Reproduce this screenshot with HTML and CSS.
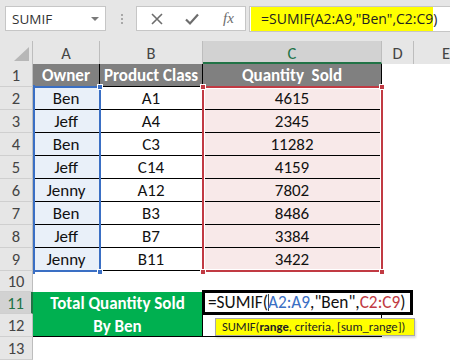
FILE: index.html
```html
<!DOCTYPE html>
<html>
<head>
<meta charset="utf-8">
<link rel="stylesheet" href="styles.css">
</head>
<body>
<div class="toolbar">
  <div class="namebox"><span>SUMIF</span><span class="dd"></span></div>
  <div class="dots"><i></i><i></i><i></i></div>
  <div class="fxbox">
    <svg class="ic" width="14" height="14" viewBox="0 0 14 14"><path d="M2 2L12 12M12 2L2 12" stroke="#6d6d6d" stroke-width="1.6" fill="none"/></svg>
    <svg class="ic" width="16" height="14" viewBox="0 0 16 14"><path d="M2 7.5L6 11.5L14 2.5" stroke="#6d6d6d" stroke-width="2.2" fill="none"/></svg>
    <span class="fx">fx</span>
  </div>
  <div class="formula"><div class="hl">=SUMIF(A2:A9,"Ben",C2:C9)</div></div>
</div>

<div class="sheet">
  <div class="ch corner"><span class="tri"></span></div>
  <div class="ch">A</div>
  <div class="ch">B</div>
  <div class="ch sel">C</div>
  <div class="ch">D</div>
  <div class="ch last">E</div>

  <div class="rh">1</div>
  <div class="c hd">Owner</div>
  <div class="c hd">Product Class</div>
  <div class="c hd">Quantity&nbsp; Sold</div>
  <div class="e"></div><div class="e"></div>

  <div class="rh">2</div><div class="c a">Ben</div><div class="c">A1</div><div class="c q">4615</div><div class="e"></div><div class="e"></div>
  <div class="rh">3</div><div class="c a">Jeff</div><div class="c">A4</div><div class="c q">2345</div><div class="e"></div><div class="e"></div>
  <div class="rh">4</div><div class="c a">Ben</div><div class="c">C3</div><div class="c q">11282</div><div class="e"></div><div class="e"></div>
  <div class="rh">5</div><div class="c a">Jeff</div><div class="c">C14</div><div class="c q">4159</div><div class="e"></div><div class="e"></div>
  <div class="rh">6</div><div class="c a">Jenny</div><div class="c">A12</div><div class="c q">7802</div><div class="e"></div><div class="e"></div>
  <div class="rh">7</div><div class="c a">Ben</div><div class="c">B3</div><div class="c q">8486</div><div class="e"></div><div class="e"></div>
  <div class="rh">8</div><div class="c a">Jeff</div><div class="c">B7</div><div class="c q">3384</div><div class="e"></div><div class="e"></div>
  <div class="rh">9</div><div class="c a">Jenny</div><div class="c">B11</div><div class="c q">3422</div><div class="e"></div><div class="e"></div>

  <div class="rh">10</div><div class="e"></div><div class="e"></div><div class="e"></div><div class="e"></div><div class="e"></div>

  <div class="rh rsel">11</div>
  <div class="total">Total Quantity Sold<br>By Ben</div>
  <div class="e"></div><div class="e"></div><div class="e"></div>

  <div class="rh">12</div>
  <div class="c12"></div><div class="e"></div><div class="e"></div>

  <div class="rh">13</div><div class="e"></div><div class="e"></div><div class="e"></div><div class="e"></div><div class="e"></div>

  <div class="selbox blue"></div>
  <div class="h hb" style="left:97px;top:43px"></div>
  <div class="h hb" style="left:97px;top:228px"></div>
  <div class="h hbl" style="left:33px;top:44px"></div>
  <div class="h hbl" style="left:33px;top:229px"></div>

  <div class="selbox red"></div>
  <div class="h hr" style="left:200px;top:43px"></div>
  <div class="h hr" style="left:379px;top:43px"></div>
  <div class="h hr" style="left:200px;top:228px"></div>
  <div class="h hr" style="left:379px;top:228px"></div>

  <div class="fill"></div>
  <div class="edit">=SUMIF(<span class="cur"></span><span class="rb">A2:A9</span>,"Ben",<span class="rr">C2:C9</span>)</div>
  <div class="tip">SUMIF(<b>range</b>, criteria, [sum_range])</div>
</div>
</body>
</html>
```

FILE: styles.css
```css
* { box-sizing: border-box; }
html, body { margin: 0; padding: 0; }
body {
  width: 450px;
  height: 360px;
  overflow: hidden;
  background: #fff;
  font-family: "Carlito", "Lato", sans-serif;
}

.toolbar {
  height: 41px;
  background: #e6e6e6;
  display: flex;
  align-items: flex-start;
  padding: 6px 0 0 5px;
}
.namebox {
  width: 101px;
  height: 25px;
  background: #fff;
  border: 1px solid #c6c6c6;
  display: flex;
  align-items: center;
  justify-content: space-between;
  padding: 0 6px 0 6px;
  font-family: "Open Sans", sans-serif;
  font-size: 13.5px;
  color: #333;
}
.dd {
  width: 0; height: 0;
  border-left: 4px solid transparent;
  border-right: 4px solid transparent;
  border-top: 4px solid #7a7a7a;
}
.dots {
  margin: 8px 0 0 15px;
  width: 2px;
  display: flex;
  flex-direction: column;
  gap: 2px;
}
.dots i { display: block; width: 2px; height: 2px; background: #a8a8a8; }
.fxbox {
  margin-left: 13px;
  width: 110px;
  height: 25px;
  background: #fff;
  border: 1px solid #c6c6c6;
  display: flex;
  align-items: center;
  padding-left: 13px;
  gap: 20px;
}
.fx {
  font-family: "Liberation Serif", serif;
  font-style: italic;
  font-size: 15px;
  color: #6d6d6d;
  margin-left: 3px;
}
.formula {
  margin-left: 3px;
  flex: 1;
  height: 26px;
  background: #fff;
  border: 1px solid #c6c6c6;
  border-right: none;
  padding: 0 0 0 1px;
}
.hl {
  width: 182px;
  height: 24px;
  background: #ffff00;
  font-family: "Open Sans", sans-serif;
  font-size: 14px;
  line-height: 24px;
  padding-left: 10px;
  color: #222;
  white-space: nowrap;
}

.sheet {
  position: relative;
  display: grid;
  grid-template-columns: 33px 67px 103px 179px 32px 36px;
  grid-template-rows: 23px repeat(9, 23px) 21px 22px 23px 23px;
  font-size: 17px;
  color: #111;
}
.ch, .rh {
  background: #e6e6e6;
  color: #444;
  display: flex;
  align-items: center;
  justify-content: center;
  font-size: 16.5px;
}
.ch { border-right: 1px solid #bdbdbd; }
.ch.corner { position: relative; }
.tri {
  position: absolute;
  right: 3px; bottom: 3px;
  width: 0; height: 0;
  border-left: 15px solid transparent;
  border-bottom: 14px solid #b7b7b7;
}
.ch.sel {
  background: #d2d2d2;
  color: #217346;
  border-bottom: 2px solid #217346;
  padding-top: 2px;
}
.ch.last { border-right: none; justify-content: flex-end; }
.rh { border-bottom: 1px solid #cfcfcf; border-right: 1px solid #bdbdbd; }
.rh.rsel {
  background: #d2d2d2;
  color: #217346;
  border-right: 2px solid #217346;
}

.c {
  display: flex;
  align-items: center;
  justify-content: center;
  border-right: 1px solid #000;
  border-bottom: 1px solid #000;
  font-size: 17px;
}
.c.hd {
  background: #808080;
  color: #fff;
  font-weight: bold;
}
.c.a { background: #e9f0f9; }
.c.q { background: #f8e9e9; }
.e { background: #fff; }

.total {
  grid-column: 2 / span 2;
  grid-row: span 2;
  background: #00b050;
  color: #fff;
  font-weight: bold;
  font-size: 17px;
  line-height: 23px;
  text-align: center;
  border-bottom: 1px solid #000;
  border-right: 1px solid #000;
  padding-top: 0px;
}
.c12 {
  border-bottom: 1px solid #000;
  border-right: 1px solid #000;
}

.selbox {
  position: absolute;
  border: 2px solid;
}
.selbox.blue {
  left: 33px; top: 45px; width: 68px; height: 186px;
  border-color: #3a6fc4;
}
.selbox.red {
  left: 202px; top: 45px; width: 181px; height: 186px;
  border-color: #c13a43;
  box-shadow: inset 0 0 0 1px #fff;
}
.h {
  position: absolute;
  width: 6px; height: 6px;
  border: 1px solid #fff;
}
.hb { background: #3a6fc4; }
.hbl { background: #3a6fc4; width: 2px; height: 4px; border: none; }
.hr { background: #c13a43; }

.fill {
  position: absolute;
  left: 378px; top: 270px;
  width: 5px; height: 4px;
  background: #217346;
}
.edit {
  position: absolute;
  left: 202px; top: 249px;
  width: 211px; height: 25px;
  background: #fff;
  border: 3px solid #000;
  font-size: 17.3px;
  line-height: 19px;
  padding-left: 3px;
  color: #111;
  white-space: nowrap;
}
.cur {
  display: inline-block;
  width: 1px; height: 17px;
  margin-right: -1px;
  background: #444;
  vertical-align: -3px;
}
.rb { color: #3a6fc4; }
.rr { color: #c13a43; }
.tip {
  position: absolute;
  left: 215px; top: 277px;
  width: 200px; height: 18px;
  background: #ffff00;
  border: 1px solid #a8a8a8;
  box-shadow: 1px 2px 2px rgba(0,0,0,0.15);
  font-family: "Carlito", "Lato", sans-serif;
  font-size: 12.6px;
  line-height: 16px;
  padding-left: 6px;
  color: #222;
  white-space: nowrap;
}
.tip b { font-weight: bold; }
```
